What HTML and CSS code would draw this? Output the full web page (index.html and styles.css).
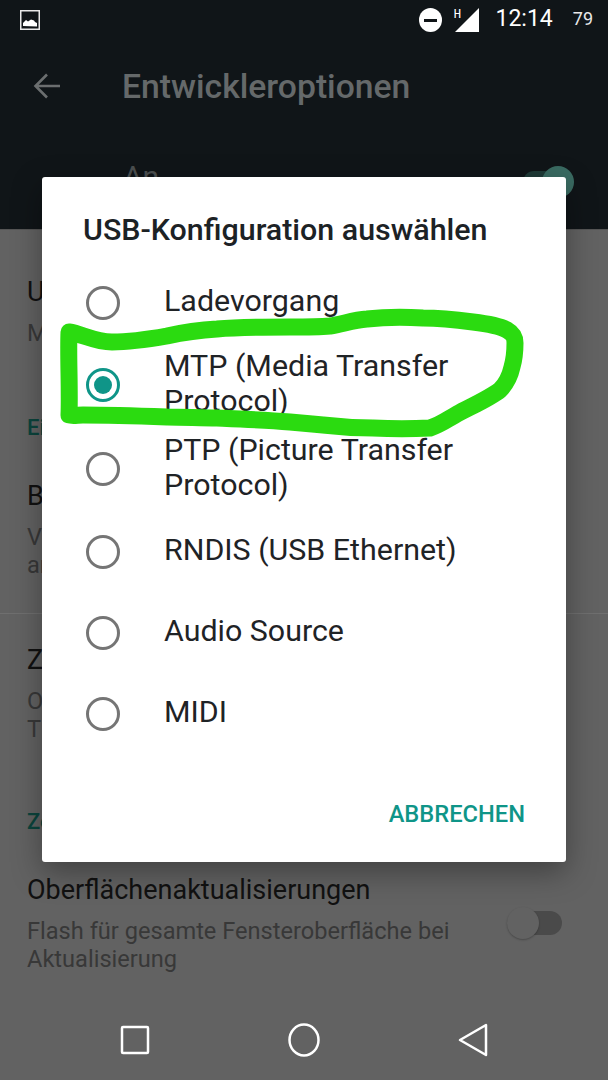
FILE: index.html
```html
<!DOCTYPE html>
<html lang="de">
<head>
  <meta charset="UTF-8">
  <title>Entwickleroptionen</title>
  <link rel="stylesheet" href="styles.css">
</head>
<body>
  <div class="screen">
    <!-- Dark header -->
    <div class="top">
      <div class="status-bar">
        <svg class="status-pic" width="20" height="20" viewBox="0 0 20 20">
          <rect x="0.75" y="0.75" width="18.500" height="18.500" fill="none" stroke="#e8e8e8" stroke-width="1.500"/>
          <path d="M3 16v-3l3-3 2 1.500 3-2 3 1 1 1.500 2 1v3.500z" fill="#fff"/>
        </svg>
        <div class="status-right">
          <span class="dnd"><span class="dnd-bar"></span></span>
          <span class="net-h">H</span>
          <svg class="signal" width="24" height="24" viewBox="0 0 24 24"><path d="M24 0v24H0z" fill="#fff"/></svg>
          <span class="clock">12:14</span>
          <span class="battery">79</span>
        </div>
      </div>
      <div class="toolbar">
        <svg class="back" width="28" height="28" viewBox="0 0 28 28">
          <path d="M27 14H3M14 2.500 2.500 14 14 25.500" fill="none" stroke="#6b6e6f" stroke-width="2.600"/>
        </svg>
        <span class="toolbar-title">Entwickleroptionen</span>
      </div>
      <div class="master">
        <span class="master-label">An</span>
        <span class="master-switch"><span class="master-thumb"></span></span>
      </div>
    </div>

    <!-- Settings list behind the dialog -->
    <div class="list">
      <div class="pref first">
        <div class="pref-title">USB-Konfiguration</div>
        <div class="pref-sub">MTP</div>
      </div>
      <div class="section">Eingabe</div>
      <div class="pref">
        <div class="pref-title">Bluetooth</div>
        <div class="pref-sub">Verbindung zu Bluetooth-Geräten</div>
        <div class="pref-sub">anzeigen</div>
      </div>
      <div class="divider"></div>
      <div class="pref">
        <div class="pref-title">Zeigerposition</div>
        <div class="pref-sub">Overlay mit aktuellen Daten zu</div>
        <div class="pref-sub">Tippaktionen</div>
      </div>
      <div class="section low">Zeichnen</div>
      <div class="pref row">
        <div>
          <div class="pref-title">Oberflächenaktualisierungen</div>
          <div class="pref-sub">Flash für gesamte Fensteroberfläche bei</div>
          <div class="pref-sub">Aktualisierung</div>
        </div>
        <span class="switch"><span class="thumb"></span></span>
      </div>
    </div>

    <div class="nav-bar">
      <svg width="30" height="30" viewBox="0 0 30 30"><rect x="2" y="2" width="26" height="26" rx="1" fill="none" stroke="#fff" stroke-width="2.500"/></svg>
      <svg width="32" height="34" viewBox="0 0 32 34"><ellipse cx="16" cy="17" rx="14.500" ry="15.500" fill="none" stroke="#fff" stroke-width="2.500"/></svg>
      <svg width="30" height="34" viewBox="0 0 30 34"><path d="M28 2v30L2 17z" fill="none" stroke="#fff" stroke-width="2.500" stroke-linejoin="round"/></svg>
    </div>

    <!-- USB dialog -->
    <div class="dialog">
      <div class="dialog-title">USB-Konfiguration auswählen</div>
      <div class="options">
        <div class="option"><span class="radio"></span><span class="option-text">Ladevorgang</span></div>
        <div class="option"><span class="radio checked"></span><span class="option-text">MTP (Media Transfer Protocol)</span></div>
        <div class="option"><span class="radio"></span><span class="option-text">PTP (Picture Transfer Protocol)</span></div>
        <div class="option"><span class="radio"></span><span class="option-text">RNDIS (USB Ethernet)</span></div>
        <div class="option"><span class="radio"></span><span class="option-text">Audio Source</span></div>
        <div class="option"><span class="radio"></span><span class="option-text">MIDI</span></div>
      </div>
      <div class="actions"><span class="cancel">ABBRECHEN</span></div>
    </div>

    <!-- Hand drawn marker round the MTP row -->
    <svg class="scribble" width="608" height="1080" viewBox="0 0 608 1080">
      <path d="M69 332C82 334 95 342 112 342C132 342 150 339 167 336C185 332 200 330 217 329C240 327 265 327 290 327C305 327 318 327 330 326C343 324 353 320 367 319C385 317 405 317 423 318C440 318 458 320 473 322C490 324 500 326 507 330C514 334 515 338 515 343C515 352 514 360 512 367C510 376 506 384 500 390C490 398 472 406 457 414C448 419 440 425 430 428C412 429 392 429 373 428C355 428 340 427 323 425C312 424 302 423 290 422C265 420 240 419 217 418C200 418 185 417 167 417C140 416 110 415 83 415C78 415 72 416 69 415C70 390 68 355 69 332Z" fill="none" stroke="#2bdb10" stroke-width="17" stroke-linejoin="round"/>
    </svg>
  </div>
</body>
</html>
```

FILE: styles.css
```css
* {
  box-sizing: border-box;
}

body {
  margin: 0;
  font-family: Roboto, sans-serif;
  background: #626262;
}

.screen {
  position: relative;
  width: 608px;
  height: 1080px;
  overflow: hidden;
  display: flex;
  flex-direction: column;
  background: #626262;
}

/* Header */
.top {
  height: 230px;
  background: #101518;
  border-bottom: 1px solid #555;
}

.status-bar {
  height: 40px;
  padding: 10px 15px 0 20px;
  display: flex;
  justify-content: space-between;
}

.status-right {
  display: flex;
  align-items: flex-start;
  color: #fff;
  height: 24px;
}

.dnd {
  width: 23px;
  height: 24px;
  margin-top: -2px;
  border-radius: 50%;
  background: #fff;
  display: flex;
  align-items: center;
  justify-content: center;
}

.dnd-bar {
  width: 13px;
  height: 3px;
  background: #101518;
}

.net-h {
  width: 8px;
  margin: -1px 0 0 11px;
  font-size: 13px;
  line-height: 11px;
  font-family: "Liberation Mono", monospace;
}

.signal {
  margin-left: -6px;
  margin-top: -2px;
}

.clock {
  margin-left: 16px;
  font-size: 23px;
  line-height: 24px;
  margin-top: -3px;
}

.battery {
  margin-left: 20px;
  font-size: 18px;
  line-height: 24px;
  margin-top: -3px;
  color: #e8e8e8;
}

.toolbar {
  height: 92px;
  padding: 0 0 0 33px;
  display: flex;
  align-items: center;
}

.toolbar-title {
  margin-left: 61px;
  font-size: 33.700px;
  font-weight: 500;
  color: #65696a;
}

.master {
  height: 97px;
  padding: 0 40px 0 123px;
  display: flex;
  justify-content: space-between;
}

.master-label {
  font-size: 30px;
  line-height: 32px;
  margin-top: 29px;
  color: #4c5051;
}

.master-switch {
  position: relative;
  width: 45px;
  height: 22px;
  margin-top: 39px;
  border-radius: 11px;
  background: #1f3a37;
}

.master-thumb {
  position: absolute;
  right: -6px;
  top: -5px;
  width: 32px;
  height: 32px;
  border-radius: 50%;
  background: #3a6b62;
}

/* Settings list */
.list {
  flex: 1;
  display: flex;
  flex-direction: column;
  padding-top: 46px;
}

.pref {
  padding: 0 27px;
}

.pref-title {
  font-size: 27px;
  line-height: 32px;
  color: #111;
}

.pref-sub {
  font-size: 23.600px;
  line-height: 28px;
  color: #383838;
}

.pref-title + .pref-sub {
  margin-top: 11px;
}

.section {
  margin: 67px 0 38px;
  padding: 0 27px;
  font-size: 22px;
  line-height: 28px;
  font-weight: 500;
  color: #0b443c;
}

.section.low {
  margin-top: 65px;
  margin-bottom: 38px;
}

.divider {
  height: 1px;
  margin: 34px 0 30px;
  background: #6f6f6f;
}

.row {
  display: flex;
  justify-content: space-between;
}

.switch {
  position: relative;
  width: 46px;
  height: 24px;
  margin: 37px 19px 0 0;
  border-radius: 12px;
  background: #4a4a4a;
}

.thumb {
  position: absolute;
  left: -9px;
  top: -4px;
  width: 32px;
  height: 32px;
  border-radius: 50%;
  background: #626262;
  box-shadow: 0 1px 2px rgba(0, 0, 0, 0.25);
}

.nav-bar {
  height: 66px;
  padding: 0 120px 15px;
  display: flex;
  align-items: center;
  justify-content: space-between;
}

/* Dialog */
.dialog {
  position: absolute;
  left: 42px;
  top: 177px;
  width: 524px;
  height: 685px;
  display: flex;
  flex-direction: column;
  background: #fff;
  border-radius: 3px;
  box-shadow: 0 10px 30px rgba(0, 0, 0, 0.35);
}

.dialog-title {
  padding: 36px 41px 0;
  height: 85px;
  font-size: 30.400px;
  line-height: 34px;
  font-weight: 500;
  color: #1c2225;
  white-space: nowrap;
}

.option {
  min-height: 81px;
  padding: 5px 40px 5px 44px;
  display: flex;
  align-items: center;
}

.radio {
  flex: none;
  width: 34px;
  height: 34px;
  margin-right: 44px;
  border: 3.500px solid #757575;
  border-radius: 50%;
}

.radio.checked {
  padding: 5px;
  border-color: #0f9588;
  background: #0f9588 content-box;
}

.option-text {
  padding-bottom: 4px;
  font-size: 30.400px;
  line-height: 35px;
  color: #1f2326;
}

.actions {
  padding: 45px 41px 0;
  display: flex;
  justify-content: flex-end;
}

.cancel {
  font-size: 23.700px;
  line-height: 30px;
  font-weight: 500;
  color: #0f9588;
}

.scribble {
  position: absolute;
  left: 0;
  top: 0;
  pointer-events: none;
}
```
